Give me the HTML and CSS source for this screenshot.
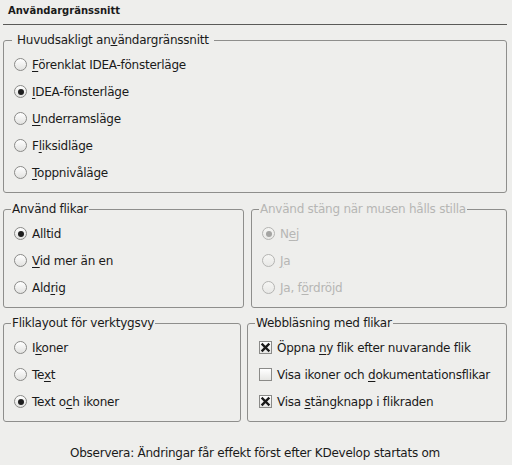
FILE: index.html
```html
<!DOCTYPE html>
<html lang="sv">
<head>
<meta charset="utf-8">
<title>Användargränssnitt</title>
<link rel="stylesheet" href="styles.css">
</head>
<body>
<div class="page">
  <div class="header">Användargränssnitt</div>
  <div class="rule"></div>

  <fieldset class="group group-main">
    <legend>Huvudsakligt an<u>v</u>ändargränssnitt</legend>
    <div class="row"><span class="radio"></span><span><u>F</u>örenklat IDEA-fönsterläge</span></div>
    <div class="row"><span class="radio on"></span><span><u>I</u>DEA-fönsterläge</span></div>
    <div class="row"><span class="radio"></span><span><u>U</u>nderramsläge</span></div>
    <div class="row"><span class="radio"></span><span>F<u>l</u>iksidläge</span></div>
    <div class="row"><span class="radio"></span><span><u>T</u>oppnivåläge</span></div>
  </fieldset>

  <div class="pair pair-top">
    <fieldset class="group">
      <legend>Använd flikar</legend>
      <div class="row"><span class="radio on"></span><span>Alltid</span></div>
      <div class="row"><span class="radio"></span><span><u>V</u>id mer än en</span></div>
      <div class="row"><span class="radio"></span><span>Ald<u>r</u>ig</span></div>
    </fieldset>
    <fieldset class="group disabled">
      <legend>Använd stäng när musen hålls stilla</legend>
      <div class="row"><span class="radio on"></span><span>N<u>e</u>j</span></div>
      <div class="row"><span class="radio"></span><span><u>J</u>a</span></div>
      <div class="row"><span class="radio"></span><span>Ja, f<u>ö</u>rdröjd</span></div>
    </fieldset>
  </div>

  <div class="pair pair-bottom">
    <fieldset class="group">
      <legend>Fliklayout för verktygsvy</legend>
      <div class="row"><span class="radio"></span><span>I<u>k</u>oner</span></div>
      <div class="row"><span class="radio"></span><span>Te<u>x</u>t</span></div>
      <div class="row"><span class="radio on"></span><span>Text o<u>c</u>h ikoner</span></div>
    </fieldset>
    <fieldset class="group group-check">
      <legend>Webbläsning med flikar</legend>
      <div class="row"><span class="check on"><svg viewBox="0 0 13 13" width="13" height="13"><path d="M3.5 3.5 L9.5 9.5 M9.5 3.5 L3.5 9.5" stroke="#1a1a1a" stroke-width="2.4" stroke-linecap="square"/></svg></span><span>Öppna <u>n</u>y flik efter nuvarande flik</span></div>
      <div class="row"><span class="check"></span><span>Visa ikoner och <u>d</u>okumentationsflikar</span></div>
      <div class="row"><span class="check on"><svg viewBox="0 0 13 13" width="13" height="13"><path d="M3.5 3.5 L9.5 9.5 M9.5 3.5 L3.5 9.5" stroke="#1a1a1a" stroke-width="2.4" stroke-linecap="square"/></svg></span><span>Visa <u>s</u>tängknapp i flikraden</span></div>
    </fieldset>
  </div>

  <div class="note">Observera: Ändringar får effekt först efter KDevelop startats om</div>
</div>
</body>
</html>
```
FILE: styles.css
```css
html, body {
  margin: 0;
  padding: 0;
  background: #eeeeec;
}

body {
  font-family: "DejaVu Sans", sans-serif;
  font-size: 12px;
  letter-spacing: -0.25px;
  color: #1a1a1a;
  width: 512px;
  height: 465px;
  overflow: hidden;
}

.page {
  padding: 0 5px 0 3px;
}

.header {
  font-weight: bold;
  font-size: 10px;
  letter-spacing: 0;
  line-height: 14px;
  padding-top: 4px;
  padding-left: 5px;
  height: 13px;
}

.rule {
  margin-top: 7px;
  height: 0;
  border-top: 1px solid #5a5a58;
}

.group {
  margin: 0;
  min-width: 0;
  padding: 4px 0 6px 10px;
  border: 1px solid #8e8e8c;
  border-radius: 3px;
}

.group legend {
  line-height: 14px;
  padding: 0 1px;
  margin-left: -3px;
}

.group-main {
  margin-top: 8px;
}

.group-main legend {
  padding: 0 5px;
  margin-left: -2px;
}

.pair {
  display: grid;
}

.pair-top {
  margin-top: 9px;
  grid-template-columns: 241px 1fr;
  column-gap: 7px;
}

.pair-bottom {
  margin-top: 8px;
  grid-template-columns: 238px 1fr;
  column-gap: 6px;
}

.row {
  display: flex;
  align-items: center;
  height: 27px;
  gap: 5px;
  white-space: nowrap;
}

.row u {
  text-decoration: underline;
  text-underline-offset: 2px;
}

.radio {
  position: relative;
  flex: none;
  width: 13px;
  height: 13px;
  box-sizing: border-box;
  border: 1px solid #8a8a88;
  border-radius: 50%;
  background: linear-gradient(#ffffff, #e2e2e0);
}

.radio.on::after {
  content: "";
  position: absolute;
  left: 2.5px;
  top: 2.5px;
  width: 6px;
  height: 6px;
  border-radius: 50%;
  background: #1e1e1e;
}

.check {
  flex: none;
  width: 13px;
  height: 13px;
  box-sizing: border-box;
  border: 1px solid #8a8a88;
  background: linear-gradient(#ffffff, #e6e6e4);
  display: flex;
  align-items: center;
  justify-content: center;
  margin-left: 1px;
}

.check svg {
  display: block;
  margin: -1px;
}

.disabled {
  color: #b6b6b4;
}

.disabled .radio {
  border-color: #b4b4b2;
  background: linear-gradient(#f6f6f4, #e8e8e6);
}

.disabled .radio.on::after {
  background: #a4a4a2;
}

.note {
  margin-top: 24px;
  line-height: 14px;
  text-align: center;
}
```
